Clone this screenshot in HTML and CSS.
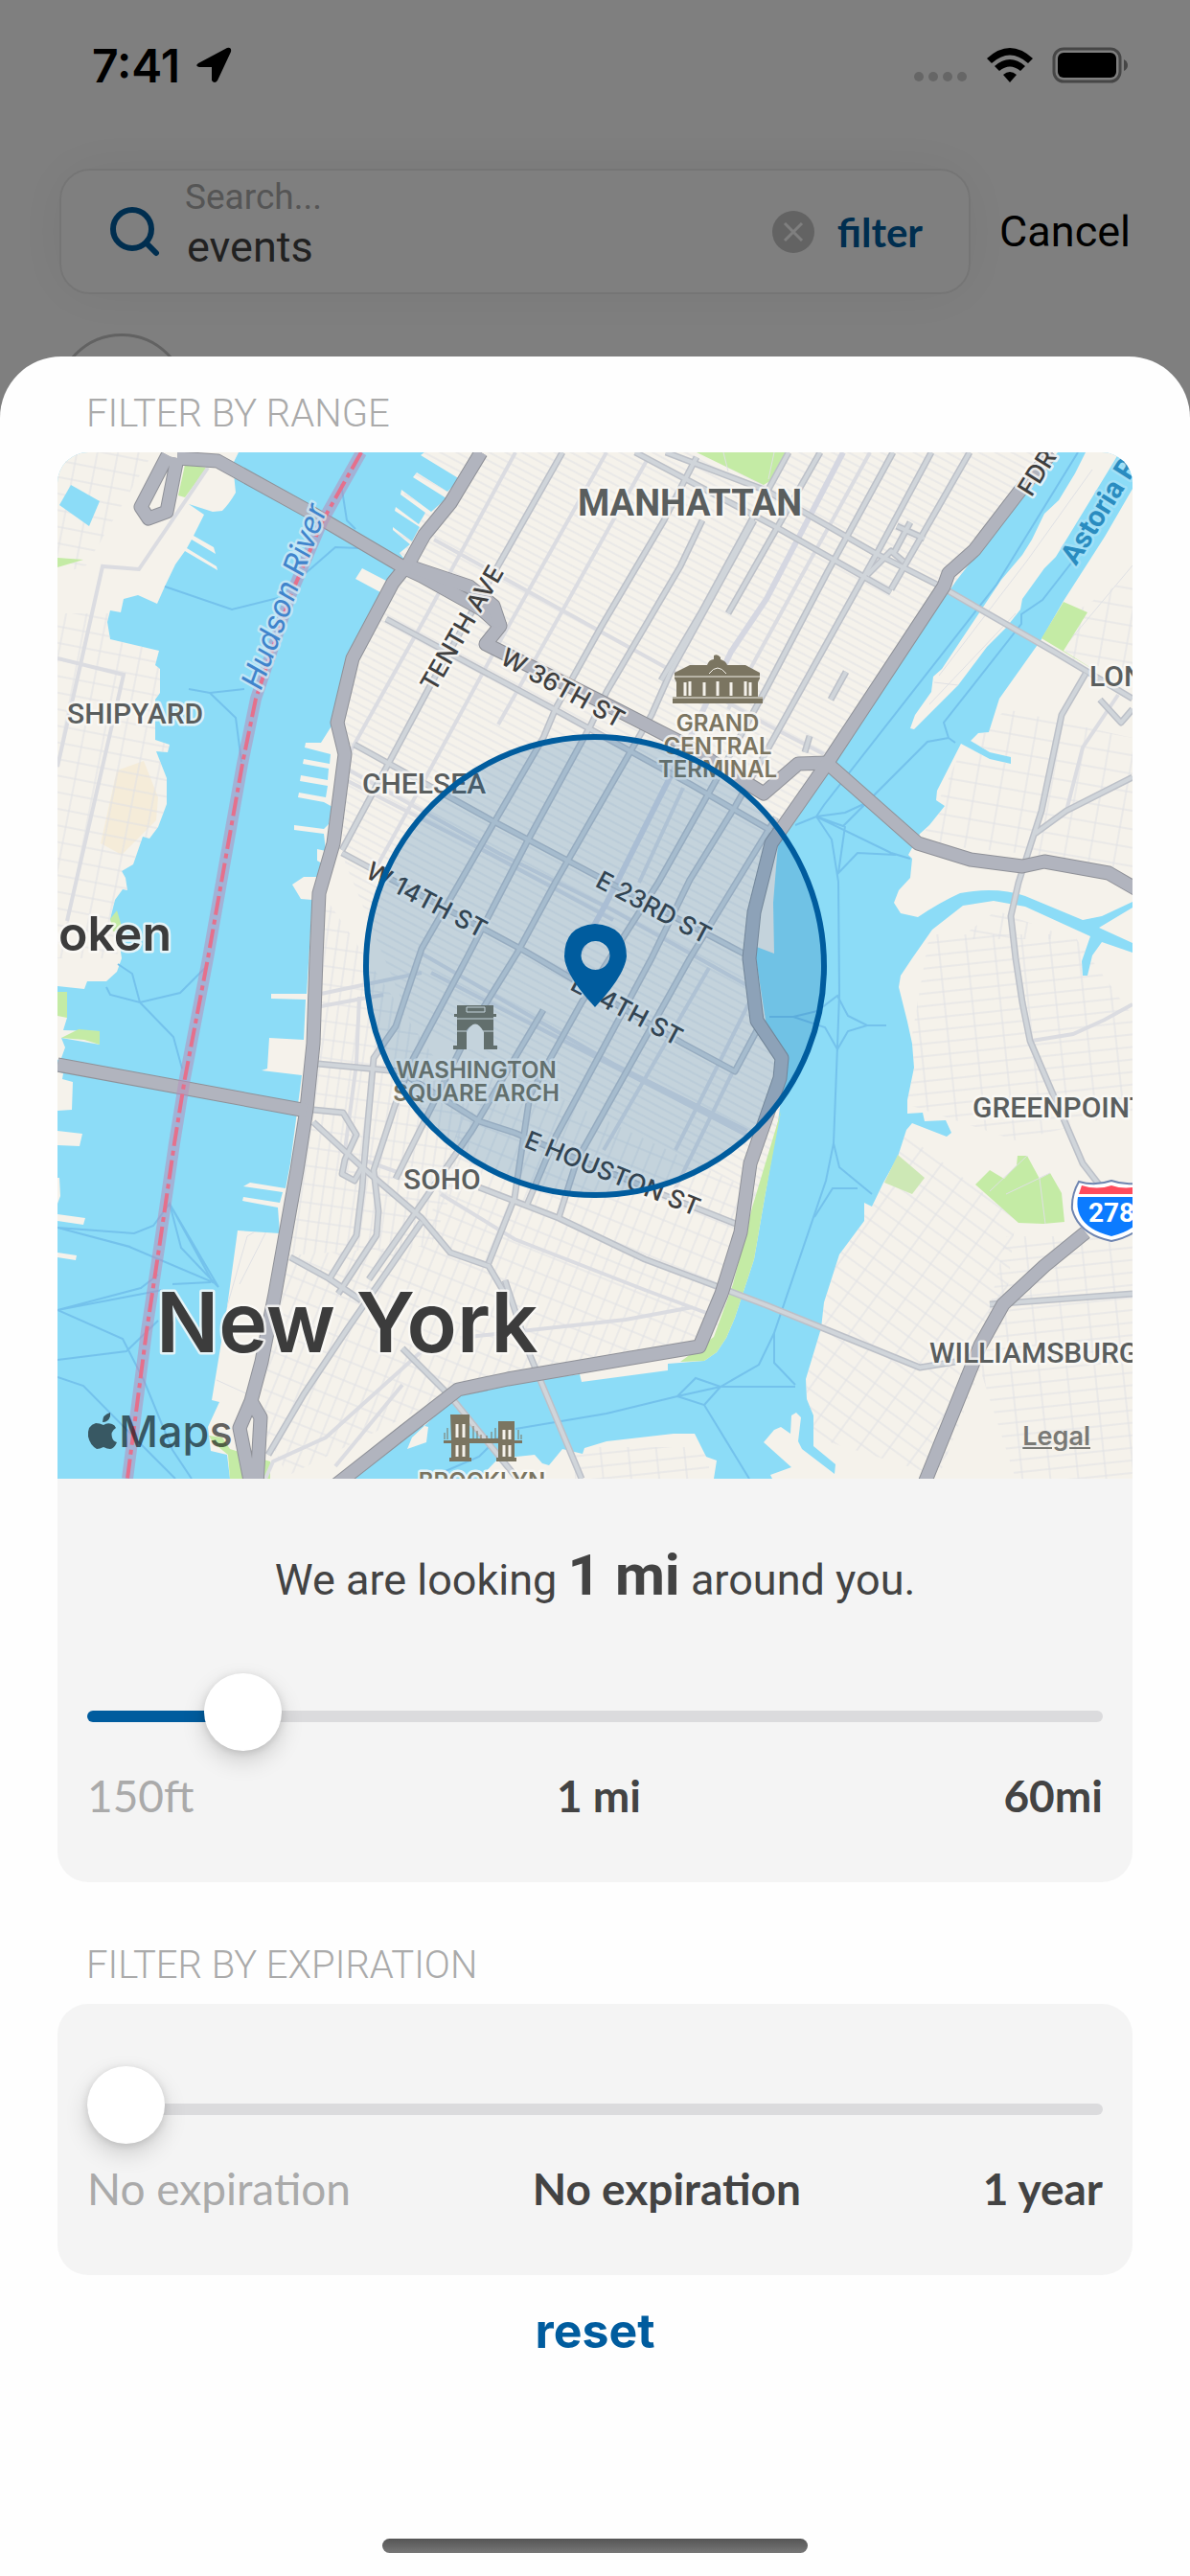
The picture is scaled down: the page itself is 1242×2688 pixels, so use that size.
FILE: index.html
```html
<!DOCTYPE html>
<html lang="en">
<head>
  <meta charset="UTF-8">
  <meta name="viewport" content="width=device-width, initial-scale=1">
  <title>Search filter</title>
  <link rel="stylesheet" href="styles.css">
</head>
<body>
  <div class="page">
    <div class="status">
      <span class="time">7:41</span>
      <svg class="location" width="38" height="38" viewBox="0 0 38 38"><path d="M3 17 L33 1 Q38 0 37 5 L23 35 Q20 39 17 35 V21 H4 Q-1 20 3 17Z"/></svg>
      <svg class="signal" width="56" height="12" viewBox="0 0 56 12"><circle cx="5" cy="6" r="5"/><circle cx="20" cy="6" r="5"/><circle cx="35" cy="6" r="5"/><circle cx="50" cy="6" r="5"/></svg>
      <svg class="wifi" width="48" height="37" viewBox="0 0 48 37"><path d="M0 11 Q24 -11 48 11 L43 16 Q24 -1 5 16Z M8 19 Q24 5 40 19 L35 24 Q24 15 13 24Z M17 28 Q24 22 31 28 L24 36Z"/></svg>
      <svg class="battery" width="80" height="38" viewBox="0 0 80 38"><rect x="2" y="2" width="69" height="34" rx="10" fill="none" stroke="#8c8c8c" stroke-width="3"/><rect x="6" y="6" width="61" height="26" rx="6"/><path d="M75 13 Q79 15 79 19 T75 25Z" fill="#8c8c8c"/></svg>
    </div>
    <div class="search-row">
      <div class="search-box">
        <svg class="search-icon" width="54" height="54" viewBox="0 0 54 54"><circle cx="24" cy="24" r="20"/><path d="M39 39 L49 49"/></svg>
        <div class="field">
          <label for="search">Search...</label>
          <input type="text" id="search" value="events">
        </div>
        <button class="clear" aria-label="Clear"><svg width="44" height="44" viewBox="0 0 44 44"><circle cx="22" cy="22" r="22" fill="#c6c6c6"/><path d="M13 13 L31 31 M31 13 L13 31" stroke="#fff" stroke-width="3"/></svg></button>
        <button class="filter">filter</button>
      </div>
      <button class="cancel">Cancel</button>
    </div>
    <div class="results"><div class="avatar"></div></div>
    <div class="backdrop"></div>
  </div>

  <main class="sheet">
    <h2>FILTER BY RANGE</h2>
    <section class="card">
      <div class="map">
        <svg viewBox="60 472 1122 1071" role="img" aria-label="Map of New York">
          <defs>
            <pattern id="blocks" width="44" height="8" patternUnits="userSpaceOnUse" patternTransform="rotate(28)"><path d="M0 1 H44"/></pattern>
            <pattern id="downtown" width="13" height="20" patternUnits="userSpaceOnUse" patternTransform="rotate(22)"><path d="M0 1 H13 M1 0 V20"/></pattern>
            <pattern id="village" width="11" height="19" patternUnits="userSpaceOnUse" patternTransform="rotate(8)"><path d="M0 1 H11 M1 0 V19"/></pattern>
            <pattern id="hoboken" width="21" height="17" patternUnits="userSpaceOnUse" patternTransform="rotate(11)"><path d="M0 1 H21 M1 0 V17"/></pattern>
            <pattern id="greenpoint" width="29" height="13" patternUnits="userSpaceOnUse" patternTransform="rotate(-6)"><path d="M0 1 H29 M1 0 V13"/></pattern>
            <pattern id="williamsburg" width="26" height="15" patternUnits="userSpaceOnUse" patternTransform="rotate(36)"><path d="M0 1 H26 M1 0 V15"/></pattern>
            <pattern id="queens" width="26" height="19" patternUnits="userSpaceOnUse" patternTransform="rotate(10)"><path d="M0 1 H26 M1 0 V19"/></pattern>

            <g id="land-shapes">
              <path d="M60 472 H249 L243 484 246 514 Q239 526 232 533 L222 534 197 526 213 537 202 559 223 571 225 578 200 563 195 572 226 591 227 595 193 575 183 589 172 612 164 630 144 621 129 625 126 639 115 637 112 649 115 667 166 679 162 694 167 698 167 723 162 730 162 772 177 777 175 785 163 784 174 812 174 839 165 863 156 875 149 873 139 902 127 909 131 916 133 929 128 928 120 939 115 959 124 980 127 1000 122 1014 111 1024 91 1024 88 1032 60 1029Z"/>
              <path d="M60 1035 H70 V1062 L66 1075 104 1076 V1090 L64 1083 68 1093 64 1104 60 1106Z M60 1118 L66 1120 65 1126 76 1129 75 1158 60 1159Z M60 1180 L86 1183 83 1196 60 1195Z M60 1229 L62 1229 63 1248 60 1256Z M60 1267 L89 1271 87 1278 60 1274Z M60 1307 L80 1310 79 1315 60 1312Z"/>
              <path d="M443 472 L439 475 480 500 467 513 435 493 431 498 466 520 450 534 419 511 418 516 444 535 437 547 413 529 412 533 438 550 430 565 410 550 410 553 428 568 417 577 427 590 405 607 378 593 371 604 397 618 395 629 365 684 347 756 335 775 319 775 318 780 345 787 344 797 317 792 316 797 343 802 342 814 314 809 313 815 342 820 340 832 312 827 311 832 338 837 347 842 343 860 338 865 307 861 307 866 338 870 340 888 331 886 331 898 338 902 333 915 317 915 305 923 314 938 326 939 320 1037 283 1037 283 1042 319 1043 317 1085 281 1083 279 1115 273 1117 315 1122 303 1214 298 1240 261 1234 254 1238 295 1244 292 1255 254 1249 253 1253 290 1260 292 1287 248 1284 237 1364 221 1461 229 1463 217 1489 220 1514 237 1518 240 1543 H355 L440 1487 447 1489 445 1505 425 1512 430 1500 478 1455 530 1444 605 1434 607 1442 697 1430 697 1423 735 1420 748 1411 758 1396 767 1375 787 1314 798 1250 812 1170 818 1125 800 1071 787 987 808 995 807 942 812 880 868 797 998 606 1080 500 1104 472Z"/>
              <path d="M1133 472 L1122 494 1105 522 1090 536 1077 563 1067 579 1045 605 1027 632 983 698 974 706 972 722 955 746 950 760 954 761 1000 715 1030 675 1050 655 1065 636 1067 625 1090 593 1102 581 1163 481 1168 472Z"/>
              <path d="M1182 510 L1153 560 1110 627 1087 667 1043 729 1032 764 1021 765 1013 773 1033 785 1055 790 1055 797 1033 792 1003 776 978 825 977 835 986 841 970 861 960 870 948 892 952 896 950 916 938 929 933 942 940 953 958 957 Q980 942 1002 932 Q1040 925 1070 935 L1130 960 1150 956 1182 941Z M1182 947 L1147 968 1182 984Z"/>
              <path d="M1182 994 L1150 983 1140 997 1135 1018 1130 1018 1129 1003 1138 977 1070 946 1037 940 1005 945 973 970 952 1000 940 1018 938 1030 947 1066 952 1089 954 1114 947 1148 947 1162 963 1161 965 1170 987 1169 993 1182 988 1186 952 1172 946 1179 937 1207 922 1234 910 1259 902 1255 902 1274 876 1309 860 1359 857 1386 841 1439 842 1460 849 1477 849 1509 872 1528 871 1538 837 1512 833 1504 836 1479 831 1474 826 1477 825 1496 815 1489 808 1492 797 1505 826 1531 804 1539 806 1543 H1182Z"/>
              <path d="M500 1543 L520 1522 558 1518 566 1527 573 1529 587 1512 608 1517 610 1511 633 1504 703 1496 725 1496 737 1520 748 1524 745 1543Z"/>
            </g>
            <mask id="land" maskUnits="userSpaceOnUse" x="60" y="472" width="1122" height="1071"><use href="#land-shapes" fill="#fff"/></mask>

            <g id="roads-major">
              <path d="M587 472 L453 708 357 887 M727 477 L693 543 628 653 580 739 567 770 517 856 440 990 413 1071 390 1104 380 1214 378 1240 372 1289 343 1336"/>
              <path d="M733 543 L710 591 633 722 617 756 553 873 487 1000 430 1107 412 1154 390 1221 395 1264 393 1289 353 1350"/>
              <path d="M787 543 L700 701 680 746 607 873 M607 873 L580 920 540 994 493 1070 413 1230"/>
              <path d="M932 472 L863 598 800 718 753 804 687 921 607 1046 553 1143 537 1250 510 1318"/>
              <path d="M972 472 L917 574 800 784 767 842 720 918 680 1000 580 1186 550 1257"/>
              <path d="M823 472 L733 637 690 710 M856 472 L760 640 M1012 472 L930 615 M810 853 L720 1000 602 1211 583 1271"/>
              <path d="M663 472 L810 550 930 618 M695 472 L800 512 913 577 980 611 1100 680 1182 729 M403 646 L580 741 720 818 810 870"/>
              <path d="M370 777 L513 856 617 911 780 997 M357 890 L547 992 713 1089 767 1118 790 1075"/>
              <path d="M332 1110 L417 1118 500 1170 537 1182 700 1250 768 1277 M500 1239 L583 1271 673 1314 750 1343 800 1362 960 1427 997 1421"/>
              <path d="M303 1312 L343 1334 377 1357 M440 1275 L363 1386 317 1455 280 1518 M567 1054 L493 1179 420 1285 385 1335"/>
              <path d="M327 1158 L358 1161 372 1184 360 1210 357 1225 370 1232 378 1218 M327 1171 L378 1218 440 1271 470 1307 510 1321 527 1350"/>
              <path d="M936 549 L965 562 M950 545 L933 577 M905 600 L930 575 943 586"/>
              <path d="M1133 703 L1108 746 1087 846 1063 921 1055 956 1060 1000 1067 1046 1075 1086 1130 1214 1147 1236 M1080 870 L1113 846 1182 811 M1033 1361 L1182 1350 M1148 730 L1170 754 1182 740"/>
              <path d="M527 1336 L553 1414 607 1543 M420 1407 L470 1457 540 1543"/>
              <path d="M883 701 L867 730 M845 768 L840 785"/>
            </g>

            <g id="highways">
              <path d="M502 472 L470 525 443 558 427 587 410 608 368 687 352 754 360 787 348 880 333 932 330 1000 327 1089 320 1157 310 1221 287 1350 273 1421 262 1462 250 1490 262 1550 M262 1462 L272 1479 268 1550"/>
              <path d="M185 478 L227 481 323 534 423 593 440 601 503 636 522 653 507 672 627 732 713 776 797 828 833 797 863 796 958 880 1013 897 1067 904 1090 899 1157 911 1190 930"/>
              <path d="M175 475 L147 529 155 541 174 534 185 478 M430 592 L490 612 515 632 522 653"/>
              <path d="M60 1111 L320 1159"/>
              <path d="M350 1550 L420 1495 478 1450 530 1439 653 1418 730 1405 753 1350 773 1286 783 1214 814 1125 816 1104 790 1065 782 1000 787 952 805 880 863 797 985 612 990 598 1017 574 1070 505 1098 472"/>
              <path d="M1133 1286 L1090 1321 1047 1361 1023 1404 964 1550"/>
            </g>
          </defs>

          <rect class="water" x="60" y="472" width="1122" height="1071"/>
          <use href="#land-shapes" class="land"/>
          <path fill="#f5ecd9" d="M122 804 L150 794 165 832 163 856 127 892 105 880Z"/>

          <!-- side streets -->
          <g mask="url(#land)">
            <path fill="url(#blocks)" d="M430 472 H1110 L860 800 810 860 780 1000 820 1120 800 1250 430 1070 360 900 350 760 400 630Z"/>
            <path fill="url(#village)" d="M335 930 L430 1070 500 1170 450 1300 300 1310 310 1200Z"/>
            <path fill="url(#downtown)" d="M500 1105 L800 1250 760 1400 500 1440 300 1540 270 1480 300 1310 440 1300Z"/>
            <path fill="url(#hoboken)" d="M60 640 H180 V900 L120 1000 H60Z M60 472 H160 L90 590 60 600Z"/>
            <path fill="url(#greenpoint)" d="M970 975 L1120 975 1182 1060 V1160 L1060 1190 940 1150Z M1050 1290 H1182 V1543 H1060 L1020 1420Z M600 1510 H740 V1543 H600Z"/>
            <path fill="url(#williamsburg)" d="M940 1180 L1060 1270 1050 1360 980 1540 850 1500 840 1440 870 1300Z"/>
            <path fill="url(#queens)" d="M1050 740 L1182 770 V920 L1060 890 960 880 1000 790Z M1040 950 L1120 980 H1000Z M1120 640 L1182 600 V700 L1110 690Z"/>
            <path class="lane" d="M980 705 L1072 585 1140 490 M970 735 L1060 640 M1115 670 L1182 590 M1000 715 L975 712 M235 1370 L258 1290 283 1275 250 1340 M226 1440 L270 1460"/>
          </g>

          <!-- parks -->
          <g fill="#c4eba5">
            <path d="M193 485 L216 488 193 519 186 517Z M60 582 L87 584 60 592Z M60 1035 H70 V1062 L60 1060Z M64 1083 L82 1074 104 1076 V1090 L88 1085Z M115 959 L122 950 128 970 118 972Z"/>
            <path d="M727 472 L797 506 807 500 823 472Z"/>
            <path d="M1110 628 L1135 639 1110 679 1150 704 1087 666Z"/>
            <path d="M937 1205 L965 1229 952 1246 923 1234Z" fill="#cde8b5"/>
            <path d="M1018 1236 L1033 1221 1048 1230 1061 1216 1062 1206 H1072 L1085 1230 1096 1224 1108 1245 1111 1275 1089 1277 1063 1276Z"/>
            <path d="M815 1160 L798 1250 787 1314 767 1375 758 1396 748 1411 735 1420 710 1421 745 1395 765 1340 785 1260Z"/>
            <path d="M218 1498 L232 1500 240 1512 282 1525 282 1543 H240 L238 1518 222 1505Z"/>
          </g>
          <path class="water" d="M74 506 L104 523 93 549 62 527Z"/>
          <path class="lane" d="M1033 1243 L1072 1206 M1050 1246 L1096 1224 M1085 1230 L1091 1277 M755 472 L760 492 M808 472 L802 500"/>

          <!-- ferry routes -->
          <g class="ferry">
            <path d="M172 612 L242 636 290 624 M356 505 L362 543 371 552 M197 719 L219 723 255 719 M219 723 L246 749 252 795 M375 572 L350 571 303 612"/>
            <path d="M123 1006 L138 1016 146 1046 181 1082 190 1115 M111 1030 L115 1038 146 1046 188 1036 214 1010"/>
            <path d="M60 1281 L140 1287 160 1279 177 1256 189 1302 228 1343 177 1256 222 1338 135 1301 60 1281 136 1301 M60 1367 L147 1344 165 1330 M60 1367 L170 1346 M60 1367 L128 1397 150 1440 180 1513 200 1543 M60 1419 L132 1410 165 1378 M60 1437 L87 1446 160 1520 183 1543 M220 1338 L180 1340"/>
            <path d="M1125 472 L1040 610 860 840 852 852 M1120 585 L1088 626 1066 641 V651 L985 754 990 770 997 775 M990 770 L968 774 880 862 852 852 882 848 908 836 M830 861 L852 852 930 890 950 896 M852 852 L868 876 875 920 876 1038 874 1092 870 1193 862 1232 808 1391 V1422 L830 1445 M882 862 L875 911 895 890 935 892"/>
            <path d="M803 1061 H828 L853 1055 874 1039 885 1060 905 1070 H925 M905 1070 L885 1076 874 1095 861 1072 828 1061 M870 1193 L876 1218 910 1246 M850 1270 L869 1240 H895"/>
            <path d="M538 1491 L633 1475 707 1457 752 1447 792 1424 808 1391 M707 1457 L726 1438 752 1447 H830 M707 1457 L735 1466 782 1543 M735 1466 L752 1447 M465 1535 L500 1520 520 1500"/>
          </g>

          <!-- streets -->
          <g class="minor">
            <path d="M538 472 L447 639 383 753 357 800 M633 472 L523 667 420 856 390 910 M677 477 L563 680 520 756 M908 472 L800 667 760 740 M713 822 L667 921 M740 1010 L630 1200 M790 1030 L705 1200 M765 1118 L700 1250"/>
            <path d="M453 563 L703 701 800 756 860 787 M363 803 L520 890 640 950 783 1030 M363 815 L500 885 640 960 M440 995 L640 1110 780 1180 M450 1015 L790 1190"/>
            <path d="M460 1246 L537 1293 673 1346 740 1371 M480 1396 L653 1377 723 1364 M335 1037 L440 1015 M335 1050 L400 1038 M375 1040 L372 1110 360 1200 M420 1445 L350 1530 M378 1210 L420 1225 M277 1543 L285 1525 340 1500 440 1410"/>
            <path d="M217 488 L145 594 107 591 83 698 60 800 M60 687 L129 704 70 961 M1167 725 L1130 780 1113 846 M1077 1086 L1120 1079 1153 1064 1182 1048"/>
            <path d="M880 472 L800 625 763 680 720 770 633 942 590 1020" stroke="#d5d7e1" stroke-width="6"/>
          </g>
          <use href="#roads-major" class="major-case"/>
          <use href="#roads-major" class="major"/>
          <use href="#highways" class="highway-case"/>
          <use href="#highways" class="highway"/>

          <path class="border-band" d="M377 472 L337 543 303 622 267 729 253 797 237 887 217 1000 193 1125 182 1193 167 1296 153 1389 133 1543"/>
          <path class="border-line" d="M377 472 L337 543 303 622 267 729 253 797 237 887 217 1000 193 1125 182 1193 167 1296 153 1389 133 1543"/>

          <!-- landmarks -->
          <g class="landmark">
            <path d="M704 708 V702 L720 694 H738 Q740 688 745 688 V684 Q749 682 752 686 V688 Q758 690 759 694 H778 L793 702 V708 L791 712 V727 H796 V734 H702 V727 H706 V712Z"/>
            <path d="M715 726 V712 M735 726 V712 M763 726 V712 M783 726 V712 M720 726 V711 M749 726 V711 M778 726 V711" stroke="#f5f2eb" stroke-width="3"/>
            <path d="M704 706 H793 M702 728 H796 M740 703 Q749 691 758 703" stroke="#f5f2eb" fill="none"/>
            <path d="M477 1049 H515 V1058 H518 V1061 H515 V1091 H519 V1095 H500 V1075 Q496 1064 487 1075 V1095 H473 V1091 H477 V1061 H474 V1058 H477Z"/>
            <path d="M487 1051 H506 V1056 H487Z M477 1063 H515 M477 1076 H487 M504 1076 H515" fill="none" stroke="#f5f2eb"/>
            <path d="M487 1095 V1077 Q496 1060 505 1077 V1095Z" fill="#f5f2eb"/>
            <path d="M470 1476 H490 V1501 H520 V1483 H537 V1503 H545 V1506 H537 V1521 H539 V1525 H518 V1521 H520 V1506 H490 V1521 H492 V1525 H469 V1521 H471 V1506 H463 V1503 H471Z"/>
            <path d="M477 1500 V1486 M484 1500 V1486 M526 1502 V1492 M532 1502 V1492 M477 1520 V1508 M484 1520 V1508 M526 1520 V1508 M532 1520 V1508" stroke="#f5f2eb" stroke-width="3"/>
            <path d="M467 1502 V1490 M464 1502 V1495 M494 1502 V1488 M498 1502 V1493 M502 1502 V1497 M508 1502 V1498 M513 1502 V1494 M517 1502 V1490 M541 1502 V1492 M544 1502 V1497" stroke="#7b7561"/>
          </g>
          <g class="label poi">
            <text x="749" y="763">GRAND</text>
            <text x="749" y="787">CENTRAL</text>
            <text x="749" y="811">TERMINAL</text>
            <text x="497" y="1125">WASHINGTON</text>
            <text x="497" y="1149">SQUARE ARCH</text>
            <text x="503" y="1554">BROOKLYN</text>
          </g>

          <g class="label street">
            <text transform="translate(490 660) rotate(-60)">TENTH AVE</text>
            <text transform="translate(583 726) rotate(29)">W 36TH ST</text>
            <text transform="translate(441 947) rotate(28)">W 14TH ST</text>
            <text transform="translate(678 955) rotate(28)">E 23RD ST</text>
            <text transform="translate(650 1062) rotate(28)">E 14TH ST</text>
            <text transform="translate(636 1233) rotate(22)">E HOUSTON ST</text>
            <text transform="translate(1090 498) rotate(-58)">FDR</text>
          </g>
          <g class="label area">
            <text x="603" y="538" class="borough">MANHATTAN</text>
            <text x="70" y="755">SHIPYARD</text>
            <text x="378" y="828">CHELSEA</text>
            <text x="421" y="1241">SOHO</text>
            <text x="1137" y="716">LONG</text>
            <text x="1015" y="1166">GREENPOINT</text>
            <text x="970" y="1422">WILLIAMSBURG</text>
          </g>
          <text class="label river" transform="translate(307 626) rotate(-70)">Hudson River</text>
          <text class="label channel" transform="translate(1123 591) rotate(-58)">Astoria River</text>
          <text class="label town" x="179" y="992">Hoboken</text>
          <text class="label city" x="163" y="1411">New York</text>

          <!-- interstate shield -->
          <path d="M1126 1233 Q1143 1238 1160 1232 Q1177 1238 1194 1233 Q1202 1247 1201 1262 Q1194 1288 1160 1295 Q1126 1288 1119 1262 Q1118 1247 1126 1233Z" fill="#fff" stroke="#6f85b0" stroke-width="2"/>
          <path d="M1129 1237 Q1145 1242 1160 1237 Q1175 1242 1191 1237 L1194 1246 H1126Z" fill="#ff4b5c"/>
          <path d="M1125 1249 H1195 Q1200 1280 1160 1290 Q1120 1280 1125 1249Z" fill="#0c7bff"/>
          <text class="shield" x="1160" y="1275">278</text>

          <g class="maps-logo">
            <path d="M115 1478 Q113 1484 107 1484 Q107 1476 115 1474Z M108 1487 Q112 1484 117 1486 Q120 1487 121 1490 Q115 1494 117 1500 Q118 1504 122 1505 Q119 1512 115 1512 Q112 1512 108 1510 Q104 1512 101 1512 Q94 1508 92 1499 Q91 1487 100 1485 Q104 1485 108 1487Z"/>
            <text x="124" y="1510">Maps</text>
          </g>

          <!-- search radius -->
          <circle cx="621" cy="1008" r="239" fill="#005c9e" fill-opacity=".2" stroke="#005c9e" stroke-width="6"/>
          <path d="M621 964 Q654 966 654 998 Q652 1018 621 1051 Q590 1018 589 998 Q589 966 621 964Z M621 982 A15 15 0 1 0 622 982Z" fill="#005c9e" fill-rule="evenodd"/>
        </svg>
        <a class="legal" href="#">Legal</a>
      </div>
      <p class="summary">We are looking <strong>1 mi</strong> around you.</p>
      <input type="range" class="slider" style="--fill: 13%" min="0" max="100" step="0.5" value="12.5" aria-label="Range">
      <div class="scale"><span class="min">150ft</span><span>1 mi</span><span>60mi</span></div>
    </section>

    <h2 class="second">FILTER BY EXPIRATION</h2>
    <section class="card expiration">
      <input type="range" class="slider" style="--fill: 0%" min="0" max="100" value="0" aria-label="Expiration">
      <div class="scale"><span class="min">No expiration</span><span>No expiration</span><span>1 year</span></div>
    </section>
    <button class="reset">reset</button>
    <div class="home"></div>
  </main>
</body>
</html>
```

FILE: styles.css
```css
* {
  box-sizing: border-box;
}
body {
  margin: 0;
  min-height: 100vh;
  display: flex;
  flex-direction: column;
  background: #fff;
  color: #434343;
  font-family: Roboto, "Liberation Sans", sans-serif;
  font-size: 45px;
}
button, input {
  font: inherit;
  color: inherit;
  background: none;
  border: none;
  padding: 0;
  margin: 0;
}
svg {
  display: block;
}

/* page behind the sheet */
.page {
  position: relative;
  overflow: hidden;
}
.backdrop {
  position: absolute;
  inset: 0;
  background: rgba(0, 0, 0, 0.5);
}
.status {
  display: flex;
  align-items: center;
  height: 136px;
  padding: 0 64px 0 96px;
  color: #000;
}
.time {
  font-family: Inter, sans-serif;
  font-size: 48px;
  font-weight: 600;
}
.location {
  margin-left: 16px;
}
.signal {
  margin-left: auto;
  margin-top: 24px;
  fill: #ccc;
}
.wifi {
  margin: 0 20px;
}
.search-row {
  display: flex;
  align-items: center;
  gap: 30px;
  margin-top: 40px;
  padding: 0 62px;
}
.search-box {
  flex: 1;
  display: flex;
  align-items: center;
  height: 131px;
  padding: 0 48px 0 50px;
  border: 2px solid #ebebeb;
  border-radius: 32px;
  box-shadow: 0 0 60px rgba(0, 0, 0, 0.06);
}
.search-icon {
  fill: none;
  stroke: #005c9e;
  stroke-width: 6;
  stroke-linecap: round;
}
.field {
  flex: 1;
  display: flex;
  flex-direction: column;
  margin: 0 20px 0 25px;
  padding-bottom: 16px;
}
.field label {
  color: #aaa;
  font-size: 37px;
  line-height: 48px;
}
.field input {
  width: 100%;
  height: 56px;
  padding-left: 2px;
}
.filter {
  margin-left: 24px;
  color: #005c9e;
  font-family: Lato, sans-serif;
  font-size: 42px;
  font-weight: 700;
}
.cancel {
  color: #000;
}
.results {
  padding: 41px 58px 0;
}
.avatar {
  width: 138px;
  height: 138px;
  border: 3px solid #c4c4c4;
  border-radius: 50%;
}

/* sheet */
.sheet {
  position: relative;
  flex: 1;
  display: flex;
  flex-direction: column;
  margin-top: -114px;
  padding: 36px 60px 24px;
  background: #fefefe;
  border-radius: 64px 64px 0 0;
}
h2 {
  margin: 0 30px 16px;
  color: #aaa;
  font-size: 40px;
  font-weight: 300;
  line-height: 48px;
}
h2.second {
  margin-top: 63px;
}
.card {
  padding-bottom: 62px;
  overflow: hidden;
  background: #f4f4f4;
  border-radius: 32px;
}
.expiration {
  padding-top: 65px;
}
.map {
  position: relative;
}
.map svg {
  width: 100%;
}
.legal {
  position: absolute;
  right: 44px;
  bottom: 28px;
  color: #797975;
  font-family: Inter, sans-serif;
  font-size: 27px;
  font-weight: 600;
  line-height: 32px;
}
.summary {
  margin: 65px 0 61px;
  line-height: 72px;
  text-align: center;
}
.summary strong {
  font-size: 60px;
}
.slider {
  -webkit-appearance: none;
  appearance: none;
  display: block;
  width: calc(100% - 62px);
  height: 90px;
  margin: 0 31px;
}
.slider::-webkit-slider-runnable-track {
  height: 12px;
  border-radius: 6px;
  background: linear-gradient(to right, #005c9e var(--fill), #dbdbdd var(--fill));
}
.slider::-webkit-slider-thumb {
  -webkit-appearance: none;
  width: 81px;
  height: 81px;
  margin-top: -39px;
  border-radius: 50%;
  background: #fff;
  box-shadow: 0 10px 24px rgba(0, 0, 0, 0.16), 0 2px 8px rgba(0, 0, 0, 0.12);
}
.scale {
  display: flex;
  justify-content: space-between;
  margin: 10px 31px 0;
  font-family: Lato, sans-serif;
  font-size: 46px;
  font-weight: 700;
  line-height: 56px;
}
.scale .min {
  color: #aaa;
  font-weight: 400;
}
.reset {
  align-self: center;
  margin-top: 28px;
  color: #005c9e;
  font-family: Inter, sans-serif;
  font-size: 50px;
  font-weight: 700;
  line-height: 60px;
}
.home {
  align-self: center;
  width: 444px;
  height: 15px;
  margin-top: auto;
  border-radius: 8px;
  background: linear-gradient(#555, #777);
}

/* map */
.water {
  fill: #8cdcf7;
}
.land {
  fill: #f5f2eb;
}
pattern path, .lane {
  fill: none;
  stroke: #dfe0e4;
  stroke-width: 1;
}
.ferry {
  fill: none;
  stroke: #74c2ec;
  stroke-width: 2;
}
.minor {
  fill: none;
  stroke: #dbdce1;
  stroke-width: 4;
}
.major-case, .major, .highway-case, .highway {
  fill: none;
  stroke-linejoin: round;
}
.major-case {
  stroke: #bcc0c8;
  stroke-width: 7;
}
.major {
  stroke: #d0d5da;
  stroke-width: 4;
}
.highway-case {
  stroke: #8f9198;
  stroke-width: 15;
}
.highway {
  stroke: #b1b4be;
  stroke-width: 13;
}
.border-band {
  fill: none;
  stroke: #b58fbb;
  stroke-opacity: 0.55;
  stroke-width: 12;
}
.border-line {
  fill: none;
  stroke: #e5708c;
  stroke-width: 4;
  stroke-dasharray: 20 5 5 5;
}
.landmark {
  fill: #7b7561;
}
.label {
  paint-order: stroke;
  stroke: #fbfaf7;
  stroke-opacity: 0.8;
  stroke-width: 5;
  stroke-linejoin: round;
}
.poi {
  fill: #7b7561;
  font-family: Inter, sans-serif;
  font-size: 24px;
  font-weight: 600;
  text-anchor: middle;
}
.street {
  fill: #3f3f3f;
  font-family: Inter, sans-serif;
  font-size: 26px;
  font-weight: 500;
  text-anchor: middle;
}
.area {
  fill: #5a5e5e;
  font-size: 30px;
  font-weight: 500;
}
.borough {
  font-size: 38px;
  font-weight: 700;
}
.river {
  fill: #3f84cc;
  stroke: #cfeaf6;
  font-family: Inter, sans-serif;
  font-size: 32px;
  font-style: italic;
  text-anchor: middle;
}
.channel {
  fill: #2a8cc0;
  stroke: #a8e2f7;
  font-size: 30px;
  font-weight: 700;
}
.town, .city {
  fill: #3c3c3c;
  font-family: Inter, sans-serif;
  font-weight: 600;
}
.town {
  font-size: 50px;
  text-anchor: end;
}
.city {
  font-size: 86px;
}
.shield {
  fill: #fff;
  font-size: 28px;
  font-weight: 700;
  text-anchor: middle;
}
.maps-logo {
  fill: #000;
  fill-opacity: 0.6;
  font-family: Inter, sans-serif;
  font-size: 45px;
  font-weight: 500;
}
```
